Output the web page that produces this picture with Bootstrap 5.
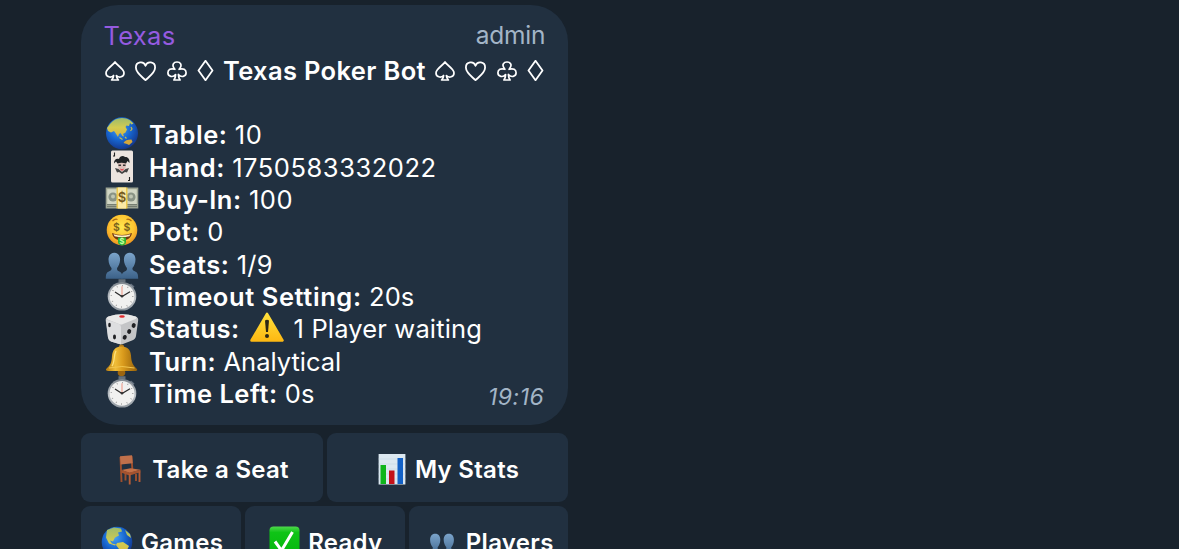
<!DOCTYPE html>
<html lang="en" data-bs-theme="dark">
<head>
<meta charset="utf-8">
<meta name="viewport" content="width=device-width, initial-scale=1">
<title>Texas Poker Bot</title>
<link href="https://cdn.jsdelivr.net/npm/bootstrap@5.3.0/dist/css/bootstrap.min.css" rel="stylesheet">
<style>
body{background:#18222c;color:#fff;font-family:Inter,"Liberation Sans",sans-serif;font-size:25.5px;line-height:32.37px;height:549px}
svg{display:block;overflow:visible;flex:none}
.chat{width:487px;margin-left:81.3px;padding-top:5px}
.bubble{background:#213040;border-radius:37px;height:420px;padding:15px 24px 0 23.700px}
.sender{color:#955be0;letter-spacing:.3px;margin-left:-1.5px}
.role{color:#a3b5c7;font-size:24.5px;letter-spacing:-.2px;margin:-1px -1px 0 0}
.headline{height:33px;margin-top:2px;white-space:nowrap}
.headline b{letter-spacing:.35px}
b{font-weight:600;letter-spacing:.5px}
.num{letter-spacing:.55px}
.info{margin-top:30px}
.line{height:32.37px;white-space:nowrap;letter-spacing:.15px}
.line>svg{margin-right:10px}
.words{position:relative;top:2px}
.clock{color:#a3b5c7;font-size:23px;font-style:italic;top:5px;letter-spacing:.5px}
.keys{gap:4px;margin-top:8px}
.keys+.keys{margin-top:4px}
.key{flex:1 1 0;background:#213040;border:0;border-radius:9px;height:69px;color:#fff;font-size:24px;font-weight:600;line-height:30px;letter-spacing:.3px;padding:4px 0 0 2px;white-space:nowrap}
.key:hover{background:#293a4c;color:#fff}
</style>
</head>
<body class="overflow-hidden">
<svg width="0" height="0" class="position-absolute" aria-hidden="true">
<defs>
<radialGradient id="sea" cx=".42" cy=".35" r=".65"><stop offset="0" stop-color="#48a4f5"/><stop offset=".55" stop-color="#1766d0"/><stop offset="1" stop-color="#14398f"/></radialGradient>
<linearGradient id="land" x2="0" y2="1"><stop offset="0" stop-color="#9dbb6c"/><stop offset=".5" stop-color="#d3cc50"/><stop offset="1" stop-color="#d9b33f"/></linearGradient>
<radialGradient id="face" cx=".5" cy=".4" r=".6"><stop offset="0" stop-color="#ffe64e"/><stop offset=".65" stop-color="#fdc531"/><stop offset="1" stop-color="#ec9220"/></radialGradient>
<linearGradient id="folk" x2="0" y2="1"><stop offset="0" stop-color="#7ba4cb"/><stop offset="1" stop-color="#3c6289"/></linearGradient>
<linearGradient id="gold"><stop offset="0" stop-color="#b57a10"/><stop offset=".3" stop-color="#f0bd38"/><stop offset=".55" stop-color="#d99a1c"/><stop offset="1" stop-color="#94600a"/></linearGradient>
<linearGradient id="warn" x2="0" y2="1"><stop offset="0" stop-color="#ffe03c"/><stop offset="1" stop-color="#fdb913"/></linearGradient>
<linearGradient id="ok" x2="0" y2="1"><stop offset="0" stop-color="#4fd84c"/><stop offset=".2" stop-color="#0fc416"/><stop offset="1" stop-color="#04b50c"/></linearGradient>
<linearGradient id="rim" x2="0" y2="1"><stop offset="0" stop-color="#7d858d"/><stop offset=".6" stop-color="#c0c5ca"/><stop offset="1" stop-color="#8c949c"/></linearGradient>
<symbol id="spade" viewBox="0 0 20 20"><path d="M10 1C8 4.500 1 7.500 1 12c0 4 5 5.300 7.600 2.500C8.600 16.500 8 17.500 6.600 19h6.800c-1.400-1.500-2-2.500-2-4.500C14 17.300 19 16 19 12c0-4.500-7-7.500-9-11z" fill="none" stroke="#fff" stroke-width="1.700" stroke-linejoin="round"/></symbol>
<symbol id="heart" viewBox="0 0 21 20"><path d="M10.500 19.200C7.500 16 .9 12 .9 6.500c0-6 7.900-6.900 9.600-1.700 1.700-5.200 9.600-4.300 9.600 1.700 0 5.500-6.600 9.500-9.600 12.700z" fill="none" stroke="#fff" stroke-width="1.800" stroke-linejoin="round"/></symbol>
<symbol id="club" viewBox="0 0 20 20"><path d="M7.900 8.300C3.900 3.500 7 1 10 1s6.100 2.500 2.100 7.300C16.200 7 19.100 8.600 19.100 11.800c0 4-5.200 5-7.700 1.700 0 2.500.4 4 1.700 5.500H6.900c1.300-1.500 1.700-3 1.700-5.500C6.100 16.800.9 15.800.9 11.800.9 8.600 3.800 7 7.900 8.300z" fill="none" stroke="#fff" stroke-width="1.700" stroke-linejoin="round"/></symbol>
<symbol id="diamond" viewBox="0 0 17 21"><path d="M8.500.8l7 9.700-7 9.700-7-9.700z" fill="none" stroke="#fff" stroke-width="1.800" stroke-linejoin="round"/></symbol>
<symbol id="watch" viewBox="0 0 34 32.37" overflow="visible"><path d="M13.500.2h7v3h-2v4h-3v-4h-2z" fill="#66717c"/><path d="M26 4.500l3.500 3-1.500 1.700-3.300-2.700z" fill="#667281"/><circle cx="17" cy="17.300" r="14.300" fill="url(#rim)"/><circle cx="17" cy="17.300" r="12.400" fill="#f1f1f0"/><circle cx="17" cy="17.300" r="10.700" fill="none" stroke="#777" stroke-width="1.400" stroke-dasharray=".6 5"/><path d="M17 17.300V7.300" stroke="#f09482" stroke-width="1"/><path d="M10 13l7 4.500 8-4.700" fill="none" stroke="#2b2b2b" stroke-width="1.200"/><circle cx="17" cy="17.300" r="1.200" fill="#333"/></symbol>
<symbol id="people" viewBox="0 0 34 32.370"><g fill="url(#folk)"><path d="M9.300 5.800c4 0 5.800 3 5.800 6.800 0 4-1.700 6.900-3 8.300-.2 2 .2 2.800 1.800 3.400 2.500 1 3.600 2.500 3.600 7.400H.8c0-5 1-6.400 3.500-7.400 1.700-.7 2.500-1.500 2.200-3.400-1.500-1.400-3-4.300-3-8.300 0-3.800 1.800-6.800 5.800-6.800z"/><path d="M24.700 5.800c-4 0-5.800 3-5.800 6.800 0 4 1.700 6.900 3 8.300.2 2-.2 2.800-1.800 3.400-2.500 1-3.600 2.500-3.600 7.400h16.700c0-5-1-6.400-3.500-7.400-1.700-.7-2.500-1.500-2.200-3.400 1.500-1.400 3-4.300 3-8.300 0-3.800-1.800-6.800-5.800-6.800z"/></g></symbol>
</defs></svg>

<main class="chat">
<section class="bubble">
  <div class="d-flex justify-content-between"><span class="sender">Texas</span><span class="role">admin</span></div>
  <div class="headline d-flex align-items-center">
    <svg width="20" height="20"><use href="#spade"/></svg>
    <svg width="21" height="20" style="margin-left:10px"><use href="#heart"/></svg>
    <svg width="20" height="20" style="margin-left:11px"><use href="#club"/></svg>
    <svg width="17" height="21" style="margin-left:10px"><use href="#diamond"/></svg>
    <b class="me-auto" style="margin-left:9px">Texas Poker Bot</b>
    <svg width="20" height="20"><use href="#spade"/></svg>
    <svg width="21" height="20" style="margin-left:10.500px"><use href="#heart"/></svg>
    <svg width="20" height="20" style="margin-left:10.500px"><use href="#club"/></svg>
    <svg width="17" height="21" style="margin:0 .5px 0 10px"><use href="#diamond"/></svg>
  </div>
  <div class="info">
    <div class="line d-flex align-items-center">
      <svg width="34" height="32.370"><circle cx="17" cy="16.300" r="16" fill="url(#sea)"/><path d="M5 7C8 3 12 1 17 1c6 .3 9 2.500 11.500 5.500l-2 1-1.500-1.500-1 3-2.500-.5-1 1.500 1.500 2.500-1.500 3-2.500 1.500 1 2.500-1.500-.5-2-3-1.500 1-1 3-2.500-4-1.500-2-3 1.500L3 14l-1-3z" fill="url(#land)"/><path d="M18.500 26c1-2.500 4-3.500 8-3.500l1 2.500-3.500 3-2-1z" fill="#d4a63c"/><path d="M14.500 20.500l3 2M20 20l1.500 1.500M26 10l1 2-1.500 2" stroke="#c7bd4e" stroke-width="1.200" fill="none"/></svg>
      <span class="words"><b>Table:</b> <span class="num">10</span></span></div>
    <div class="line d-flex align-items-center">
      <svg width="34" height="32.370"><rect x="6" y=".6" width="22" height="32" rx="1.500" fill="#ece4df"/><path d="M9.500 2.500v3.500H8M24.500 27v3.500H23" fill="none" stroke="#222" stroke-width="1.100"/><path d="M12.500 12.500h9l-1 6-3.500 3.500-3.500-3.500z" fill="#dcc0ba"/><path d="M9 13.500c-.2-4 2.500-5.500 5-4.500.5-2.500 4-4 6-2 3-.3 5 2.500 4.500 6l-2-2-1.500 2.500c-3-1-6-1-8.500 0l-1.500-2z" fill="#1f2225"/><path d="M13.500 14.500H16V16h-2.500zM18 14.500h2.500V16H18z" fill="#333"/><path d="M10 18l3.500 1 3.500 3 3.500-3 3.500-1-2 4.500-2-.5-3 2-3-2-2 .5z" fill="#444"/><path d="M15 18.500q2 1.200 4 0l-.8 2h-2.400z" fill="#de4b55"/></svg>
      <span class="words"><b>Hand:</b> <span class="num">1750583332022</span></span></div>
    <div class="line d-flex align-items-center">
      <svg width="34" height="32.370"><path d="M.7 5.500h32.600v21H.7z" fill="#9ca393"/><path d="M2.200 7.200h29.600v15H2.200z" fill="#d1d6c4"/><circle cx="8" cy="15" r="4.600" fill="#899385"/><circle cx="26" cy="15" r="4.600" fill="#899385"/><circle cx="8" cy="14.500" r="2" fill="#bec5b3"/><circle cx="26" cy="14.500" r="2" fill="#bec5b3"/><path d="M2 22.500h30M2 24.500h30" stroke="#697267" stroke-width=".8"/><path d="M11.500 5.500h11v21h-11z" fill="#ecc94c"/><path d="M13 5.500h8v21h-8z" fill="#fae9a5"/><text x="17" y="20" text-anchor="middle" font-size="13" font-weight="600" fill="#75591d">$</text></svg>
      <span class="words"><b>Buy-In:</b> <span class="num">100</span></span></div>
    <div class="line d-flex align-items-center">
      <svg width="34" height="32.370"><circle cx="17" cy="16" r="15.300" fill="url(#face)"/><path d="M7.500 7q2.500-2.500 5-1.500M21.500 5.500q2.500-1 5 1.500" stroke="#aa6914" stroke-width="1.200" fill="none"/><g font-size="10.500" font-weight="600" fill="#78601c" text-anchor="middle"><text x="11.500" y="17">$</text><text x="22" y="17">$</text></g><path d="M7 19c6 2.500 14 2.500 20 0-1 5.500-5 7.500-10 7.500S8 24.500 7 19z" fill="#743713"/><path d="M8.500 20.200c5.500 1.700 11.500 1.700 17 0l-1 2c-5 1.300-10 1.300-15 0z" fill="#fff0c4"/><path d="M13 23.500h8V28c0 4.500-8 4.500-8 0z" fill="#25b437"/><text x="17" y="30" text-anchor="middle" font-size="8" font-weight="700" fill="#caff9d">$</text></svg>
      <span class="words"><b>Pot:</b> 0</span></div>
    <div class="line d-flex align-items-center">
      <svg width="34" height="32.370"><use href="#people"/></svg>
      <span class="words"><b>Seats:</b> 1/9</span></div>
    <div class="line d-flex align-items-center">
      <svg width="34" height="32.370"><use href="#watch"/></svg>
      <span class="words"><b style="letter-spacing:.58px">Timeout Setting:</b> 20s</span></div>
    <div class="line d-flex align-items-center">
      <svg width="34" height="32.370"><path d="M3.500 4.500Q17 0 30.500 4.500q3.500 1 2.500 5l-2 14.500q-.5 3-4 4.500L18 32q-2 .8-4 0l-8-2.500q-2.500-1-3-4L.7 8.500Q.3 5.500 3.500 4.500z" fill="#c4c5c7"/><path d="M3.500 4.500Q17 0 30.500 4.500q2.500 1 0 2.500L18 12q-2 1-4 0L2.500 7.500Q1 5.500 3.500 4.500z" fill="#e9e9e9"/><path d="M1 7.500l13 4.500q2 1 2 3v17.500l-10-3q-2.500-1-3-4z" fill="#dddee0"/><ellipse cx="17" cy="4.500" rx="2.800" ry="1.200" fill="#e12a2e"/><g fill="#202124"><ellipse cx="4.500" cy="13" rx="1.300" ry="2.200"/><ellipse cx="9.500" cy="25" rx="1.500" ry="2.400"/><ellipse cx="28.500" cy="13.500" rx="2" ry="2.400" transform="rotate(20 28.500 14)"/><ellipse cx="24" cy="19.500" rx="2" ry="2.400" transform="rotate(20 24 20)"/><ellipse cx="19.500" cy="25.500" rx="2" ry="2.400" transform="rotate(20 20 26)"/></g></svg>
      <span class="words d-flex align-items-center" style="top:1.500px"><b>Status:</b><svg width="34" height="30" style="margin:-4px 10px 0"><path d="M17 1.800L32.500 28.500h-31z" fill="url(#warn)" stroke="url(#warn)" stroke-width="2.500" stroke-linejoin="round"/><path d="M15 8.500q2-1.500 4 0l-1 11.500h-2z" fill="#2d2715"/><circle cx="17" cy="24" r="2" fill="#2d2715"/></svg>1 Player waiting</span></div>
    <div class="line d-flex align-items-center">
      <svg width="34" height="32.370"><circle cx="16.500" cy="3.300" r="2.700" fill="#b37b1b"/><circle cx="16.500" cy="28.500" r="3.800" fill="#9c650f"/><path d="M16.500 2.500c6.500 0 9 3.500 9.500 9 .5 7 1.500 9 5 12.500 2 2 1.500 3-1 3H4c-3 0-4-1-2-3C5.500 21 6.500 19 7 12c.5-5.500 3-9.500 9.500-9.500z" fill="url(#gold)"/><path d="M4 24q13-3 25.500 0" stroke="#f3c64e" stroke-width="1" fill="none"/><path d="M11 7c-2.500 4-1 11-4 15" stroke="#ffe27a" stroke-width="1.300" fill="none"/></svg>
      <span class="words"><b>Turn:</b> <span style="letter-spacing:0">Analytical</span></span></div>
    <div class="line d-flex align-items-center">
      <svg width="34" height="32.370"><use href="#watch"/></svg>
      <span class="words"><b>Time Left:</b> 0s</span><span class="words clock ms-auto">19:16</span></div>
  </div>
</section>
<div class="keys d-flex">
  <button class="btn key d-flex justify-content-center align-items-center"><svg width="30" height="32" style="margin-right:5px"><g stroke="#9d4f2d" stroke-width="1.900" fill="none"><path d="M3.500 3l1 25M14.500 2l.8 13M8.500 18v8.500M19 20v7"/></g><path d="M3 2.200l12-1 .7 8-12 1.300z" fill="#c0704b"/><path d="M4.500 16l9-1.700 10 1.500-11 3.200z" fill="#c57148"/><path d="M4.500 16l8 2.500v3l-8-2.700zM12.500 18.500l11-2.700v2.500l-11 3.200z" fill="#a5532f"/><path d="M12.700 20v10.500M22.500 17.500V28" stroke="#b45c36" stroke-width="1.900"/></svg>Take a Seat</button>
  <button class="btn key d-flex justify-content-center align-items-center"><svg width="28" height="32" style="margin-right:9px"><path d="M.6 0h26.800v30.500H.6z" fill="#dce8f1"/><path d="M.6 5h26.800M.6 10h26.800M.6 15h26.800M.6 20h26.800M.6 25h26.800" stroke="#c7d7e4" stroke-width=".6"/><path d="M2.500 11H8v19H2.500z" fill="#0eb51b"/><path d="M11 16.500h5.500V30H11z" fill="#c41119"/><path d="M19.500 4H25v26h-5.500z" fill="#1261c7"/></svg>My Stats</button>
</div>
<div class="keys d-flex">
  <button class="btn key d-flex justify-content-center align-items-center"><svg width="32" height="32" style="margin-right:8px"><circle cx="16" cy="15" r="15.300" fill="url(#sea)"/><path d="M6 3l7-2.500 7 1 1 3-4 1 1 3-4 2-2 4-3-1 2 3 4 1-1 1-6-2-3-6zM16 16l6-1 6 4-3 6-4 5-2-1-1-7-3-4zM24 3l5 4 1 4-4-3z" fill="url(#land)"/></svg>Games</button>
  <button class="btn key d-flex justify-content-center align-items-center"><svg width="31" height="31" style="margin-right:8px"><rect x=".5" y="-.5" width="30" height="30" rx="4" fill="url(#ok)"/><path d="M6 14.500l6.500 9L23.500 5" fill="none" stroke="#fff" stroke-width="3"/></svg>Ready</button>
  <button class="btn key d-flex justify-content-center align-items-center"><svg width="30" height="30" style="margin-right:9px"><use href="#people"/></svg><span style="margin-right:-1.500px">Players</span></button>
</div>
</main>
<script src="https://cdn.jsdelivr.net/npm/bootstrap@5.3.0/dist/js/bootstrap.bundle.min.js"></script>
</body>
</html>
